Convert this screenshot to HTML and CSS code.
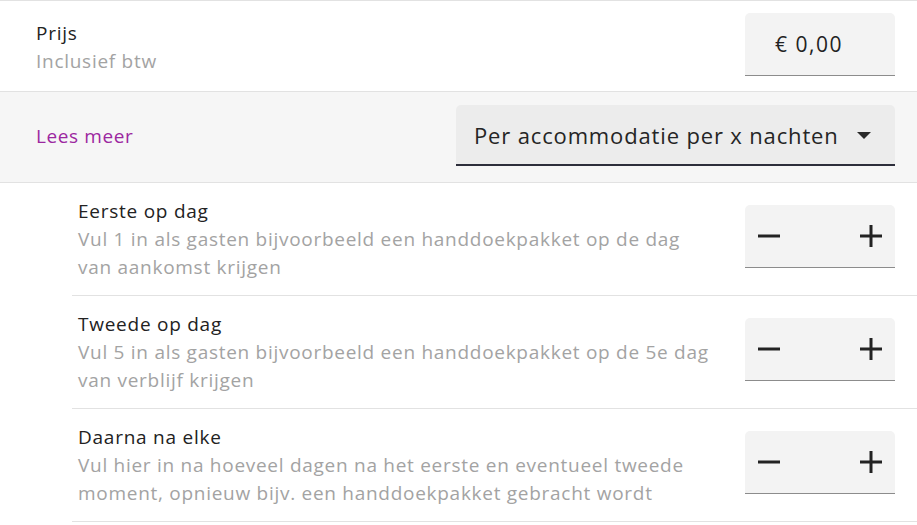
FILE: index.html
```html
<!DOCTYPE html>
<html lang="nl">
<head>
<meta charset="utf-8">
<title>Prijs</title>
<link rel="stylesheet" href="styles.css">
</head>
<body>
<div class="panel">
  <div class="row price-row">
    <div class="labels">
      <div class="title">Prijs</div>
      <div class="desc">Inclusief btw</div>
    </div>
    <div class="field price-field">€ 0,00</div>
  </div>
  <div class="row mode-row">
    <a class="link">Lees meer</a>
    <div class="select">
      <span>Per accommodatie per x nachten</span>
      <svg class="caret" width="14" height="7" viewBox="0 0 14 7"><path d="M0 0h14L7 7z" fill="#2a2a2a"/></svg>
    </div>
  </div>
  <div class="subrows">
    <div class="subrow">
      <div class="labels">
        <div class="title">Eerste op dag</div>
        <div class="desc">Vul 1 in als gasten bijvoorbeeld een handdoekpakket op de dag<br>van aankomst krijgen</div>
      </div>
      <div class="field stepper">
        <svg width="22" height="22" viewBox="0 0 22 22"><path d="M0 11h22" stroke="#222" stroke-width="3"/></svg>
        <svg width="22" height="22" viewBox="0 0 22 22"><path d="M0 11h22M11 0v22" stroke="#222" stroke-width="3"/></svg>
      </div>
    </div>
    <div class="subrow">
      <div class="labels">
        <div class="title">Tweede op dag</div>
        <div class="desc">Vul 5 in als gasten bijvoorbeeld een handdoekpakket op de 5e dag<br>van verblijf krijgen</div>
      </div>
      <div class="field stepper">
        <svg width="22" height="22" viewBox="0 0 22 22"><path d="M0 11h22" stroke="#222" stroke-width="3"/></svg>
        <svg width="22" height="22" viewBox="0 0 22 22"><path d="M0 11h22M11 0v22" stroke="#222" stroke-width="3"/></svg>
      </div>
    </div>
    <div class="subrow">
      <div class="labels">
        <div class="title">Daarna na elke</div>
        <div class="desc">Vul hier in na hoeveel dagen na het eerste en eventueel tweede<br>moment, opnieuw bijv. een handdoekpakket gebracht wordt</div>
      </div>
      <div class="field stepper">
        <svg width="22" height="22" viewBox="0 0 22 22"><path d="M0 11h22" stroke="#222" stroke-width="3"/></svg>
        <svg width="22" height="22" viewBox="0 0 22 22"><path d="M0 11h22M11 0v22" stroke="#222" stroke-width="3"/></svg>
      </div>
    </div>
  </div>
</div>
</body>
</html>
```
FILE: styles.css
```css
html, body {
  margin: 0;
  padding: 0;
  background: #ffffff;
}
body {
  font-family: "Open Sans", "Noto Sans", sans-serif;
  color: #212121;
}
.panel {
  border-top: 1px solid #e2e2e2;
}
.row {
  display: flex;
  justify-content: space-between;
  box-sizing: border-box;
  padding: 0 22px 0 36px;
  border-bottom: 1px solid #e2e2e2;
}
.price-row {
  height: 91px;
  padding-top: 12px;
  align-items: flex-start;
}
.price-row .labels {
  padding-top: 6px;
}
.title {
  font-size: 19px;
  line-height: 28px;
  letter-spacing: 0.75px;
  color: #222222;
}
.desc {
  font-size: 19px;
  line-height: 28px;
  letter-spacing: 0.72px;
  color: #a3a3a3;
  white-space: nowrap;
}
.field {
  box-sizing: border-box;
  width: 150px;
  height: 63px;
  background: #f3f3f3;
  border-radius: 5px 5px 0 0;
  border-bottom: 1px solid #8c8c8c;
}
.price-field {
  font-size: 21px;
  line-height: 62px;
  letter-spacing: 1.5px;
  padding-left: 30px;
  color: #222222;
}
.mode-row {
  height: 91px;
  background: #f6f6f6;
  align-items: flex-start;
  padding-top: 13px;
}
.link {
  font-size: 19px;
  line-height: 28px;
  letter-spacing: 0.6px;
  margin-top: 17px;
  color: #9c27a0;
  cursor: pointer;
}
.select {
  box-sizing: border-box;
  width: 439px;
  height: 61px;
  background: #ececec;
  border-radius: 5px 5px 0 0;
  border-bottom: 2px solid #2d2e3b;
  display: flex;
  align-items: center;
  justify-content: space-between;
  padding: 0 24px 0 18px;
  font-size: 22px;
  letter-spacing: 0.85px;
  color: #252525;
}
.caret {
  margin-top: 2px;
}
.subrows {
  padding-left: 72px;
}
.subrow {
  display: flex;
  justify-content: space-between;
  align-items: flex-start;
  box-sizing: border-box;
  height: 113px;
  padding: 14px 22px 0 6px;
  border-bottom: 1px solid #e2e2e2;
}
.stepper {
  margin-top: 8px;
  display: flex;
  align-items: center;
  justify-content: space-between;
  padding: 0 13px;
}
```
